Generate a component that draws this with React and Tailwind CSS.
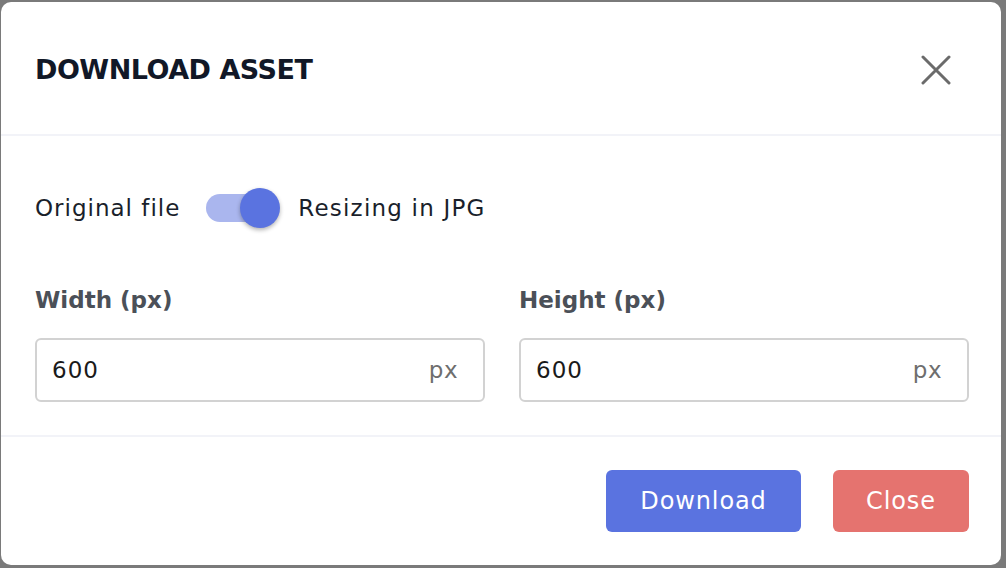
import { useState } from 'react';

const font = { fontFamily: '"DejaVu Sans", "Noto Sans", sans-serif' };

const SizeField = ({ label, value }) => (
  <div className="flex flex-col">
    <label className="text-[23px] leading-[32px] font-bold text-[#4b5058]">{label}</label>
    <div className="mt-[22px] h-[64px] flex items-center justify-between rounded-[6px] border-2 border-[#d2d2d2] pl-[15px] pr-[25px]">
      <span className="text-[23px] tracking-[1px] text-[#1a1a1a]">{value}</span>
      <span className="text-[23px] tracking-[0.5px] text-[#6e6e6e]">px</span>
    </div>
  </div>
);

const App = () => {
  const [resize, setResize] = useState(true);

  return (
    <div className="w-[1006px] h-[568px] bg-[#7a7a7a] pt-[2px] pl-[1px] overflow-hidden" style={font}>
      <div className="w-[1000px] h-[563px] bg-white rounded-[10px] flex flex-col">
        <div className="h-[134px] flex items-center justify-between pl-[34px] pr-[50px] pt-[4px] border-b-2 border-[#f2f3f8]">
          <h2 className="text-[27px] font-bold tracking-[-0.5px] text-[#111827]">DOWNLOAD ASSET</h2>
          <svg width="30" height="30" viewBox="0 0 30 30" className="text-[#6b6b6b]">
            <path d="M2 2 L28 28 M28 2 L2 28" stroke="currentColor" strokeWidth="3" strokeLinecap="round" />
          </svg>
        </div>

        <div className="flex-1 pl-[34px] pr-[32px] pt-[52px] border-b-2 border-[#f2f3f8]">
          <div className="h-[40px] flex items-center">
            <span className="text-[23px] tracking-[1px] text-[#1a1f2b]">Original file</span>
            <button
              onClick={() => setResize(!resize)}
              className="relative ml-[26px] w-[74px] h-[40px] flex items-center"
            >
              <span className={`block w-[64px] h-[28px] rounded-full ${resize ? 'bg-[#aab6ee]' : 'bg-[#d1d5db]'}`} />
              <span className={`absolute top-0 w-[40px] h-[40px] rounded-full shadow-[0_2px_4px_rgba(0,0,0,0.3)] ${resize ? 'left-[34px] bg-[#5a73e0]' : 'left-0 bg-white'}`} />
            </button>
            <span className="ml-[18px] text-[23px] tracking-[1.2px] text-[#1a1f2b]">Resizing in JPG</span>
          </div>

          <div className="mt-[56px] grid grid-cols-2 gap-[34px]">
            <SizeField label="Width (px)" value="600" />
            <SizeField label="Height (px)" value="600" />
          </div>
        </div>

        <div className="h-[128px] flex items-center justify-end gap-[32px] pr-[32px]">
          <button className="w-[195px] h-[62px] rounded-[6px] bg-[#5a73e0] text-white text-[24px] tracking-[0.9px]">Download</button>
          <button className="w-[136px] h-[62px] rounded-[6px] bg-[#e5736f] text-white text-[24px] tracking-[0.9px]">Close</button>
        </div>
      </div>
    </div>
  );
};

export default App;
